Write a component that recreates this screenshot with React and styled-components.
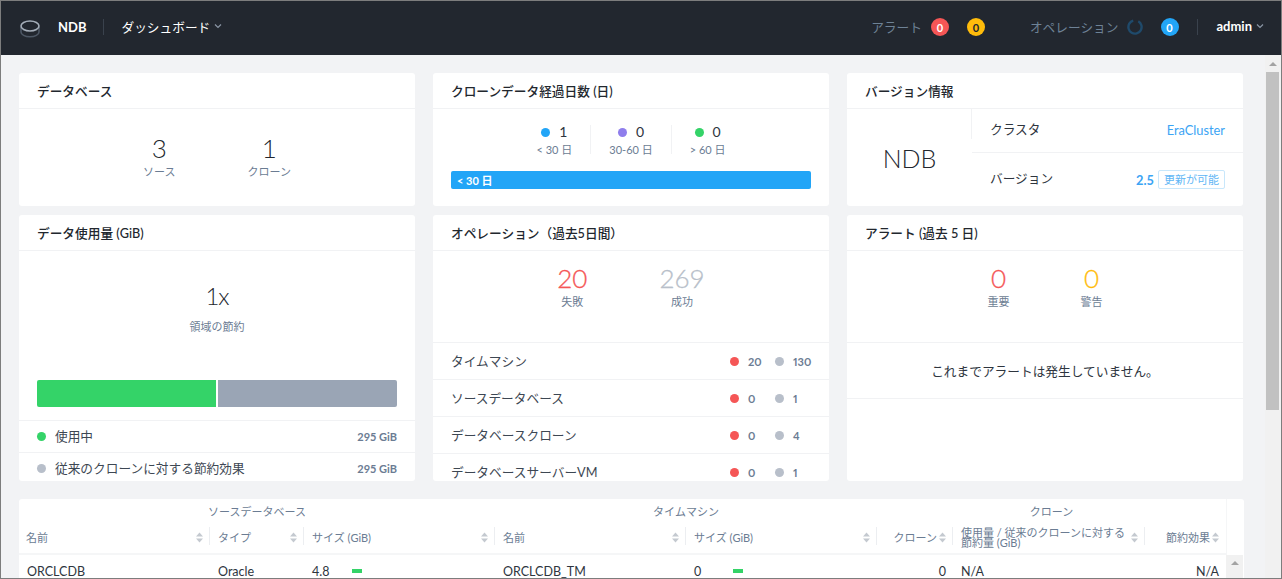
import React from 'react';
import styled, { createGlobalStyle } from 'styled-components';

const GlobalStyle = createGlobalStyle`
  html, body {
    margin: 0;
    height: 100%;
    overflow: hidden;
  }

  * {
    box-sizing: border-box;
  }

  body {
    font-family: Lato, "Noto Sans CJK JP", sans-serif;
    font-size: 12.7px;
    color: #2e353e;
    background: #f2f3f5;
  }
`;

const Frame = styled.div`
  display: flex;
  flex-direction: column;
  height: 579px;
  border: 1px solid #7d7d7d;
  overflow: hidden;
`;

const TopBar = styled.header`
  flex: none;
  display: flex;
  align-items: center;
  justify-content: space-between;
  height: 54px;
  padding: 0 17px 2px 19px;
  background: #22272f;
`;

const BarGroup = styled.div`
  display: flex;
  align-items: center;
`;

const LogoMark = styled.svg`
  margin-top: 3px;
`;

const Brand = styled.strong`
  margin-left: 18px;
  font-weight: 700;
  font-size: 13px;
  color: #fff;
`;

const UserName = styled(Brand)`
  margin-left: 0;
`;

const BarDivider = styled.span`
  width: 1px;
  height: 16px;
  margin: 0 ${({ $right }) => $right}px 0 ${({ $left }) => $left}px;
  background: #3a424d;
`;

const Menu = styled.span`
  display: flex;
  align-items: center;
  gap: 4px;
  padding-bottom: 2px;
  color: #fff;
`;

const BarLabel = styled.span`
  margin-left: ${({ $left }) => $left || 0}px;
  padding-bottom: 2px;
  color: #6e8296;
`;

const Count = styled.span`
  display: flex;
  align-items: center;
  justify-content: center;
  width: 18px;
  height: 18px;
  margin-left: ${({ $left }) => $left}px;
  border-radius: 50%;
  background: ${({ $bg }) => $bg};
  font-weight: 700;
  font-size: 11px;
  color: ${({ $fg }) => $fg || '#fff'};
`;

const SpinnerMark = styled.svg`
  margin-left: 8px;
`;

const Body = styled.div`
  flex: 1;
  display: flex;
  min-height: 0;
`;

const Content = styled.main`
  flex: 1;
  min-width: 0;
  padding: 18px 21px 0 18px;
`;

const Cards = styled.div`
  display: grid;
  grid-template-columns: repeat(3, 396px);
  grid-template-rows: 133px 266px;
  gap: 9px 18px;
`;

const Card = styled.section`
  display: flex;
  flex-direction: column;
  overflow: hidden;
  border-radius: 3px;
  background: #fff;
`;

const CardTitle = styled.h2`
  flex: none;
  height: 36px;
  margin: 0;
  padding: 0 18px;
  border-bottom: 1px solid #f1f2f4;
  font-weight: 500;
  font-size: 12.7px;
  line-height: 37px;
  color: #22272e;
`;

const Stats = styled.div`
  flex: none;
  display: flex;
  justify-content: center;
  gap: ${({ $gap }) => $gap || 72}px;
  height: ${({ $height }) => $height}px;
  padding-top: ${({ $top }) => $top}px;
`;

const Stat = styled.div`
  display: flex;
  flex-direction: column;
  align-items: center;
`;

const StatValue = styled.span`
  font-weight: 300;
  font-size: 26px;
  line-height: 30px;
  color: ${({ $color }) => $color || '#22272e'};
  -webkit-text-stroke: ${({ $color }) => ($color ? '0.3px' : '0')};
`;

const StatLabel = styled.span`
  margin-top: 1px;
  font-size: 11px;
  line-height: 16px;
  color: #6b7c93;
`;

const AgeRow = styled.div`
  display: flex;
  justify-content: center;
  margin-top: 16px;
`;

const AgeItem = styled.div`
  display: flex;
  flex-direction: column;
  align-items: center;
  height: 29px;
  padding: 0 18px;
  border-right: ${({ $last }) => ($last ? 'none' : '1px solid #f1f2f4')};
`;

const AgeValue = styled.span`
  display: flex;
  align-items: center;
  gap: 9px;
  font-size: 14px;
  line-height: 14px;
`;

const AgeLabel = styled.span`
  margin-top: 3px;
  font-size: 11px;
  line-height: 15px;
  color: #6b7c93;
`;

const Dot = styled.i`
  flex: none;
  width: 9px;
  height: 9px;
  border-radius: 50%;
  background: ${({ $color }) => $color};
`;

const AgeBar = styled.div`
  height: 18px;
  margin: 17px 18px 0;
  padding-left: 6px;
  border-radius: 2px;
  background: #22a5f7;
  font-weight: 700;
  font-size: 11px;
  line-height: 19px;
  color: #fff;
`;

const VersionBody = styled.div`
  flex: 1;
  display: flex;
`;

const ProductName = styled.div`
  position: relative;
  display: flex;
  align-items: center;
  justify-content: center;
  width: 125px;
  font-weight: 300;
  font-size: 25px;
  color: #22272e;

  &::after {
    content: '';
    position: absolute;
    top: 0;
    right: 0;
    width: 1px;
    height: 30px;
    background: #f1f2f4;
  }
`;

const VersionRows = styled.div`
  flex: 1;
  display: flex;
  flex-direction: column;
`;

const VersionRow = styled.div`
  flex: ${({ $grow }) => ($grow ? 1 : 'none')};
  display: flex;
  align-items: center;
  justify-content: space-between;
  height: ${({ $grow }) => ($grow ? 'auto' : '44px')};
  padding: 0 18px;
  border-bottom: ${({ $grow }) => ($grow ? 'none' : '1px solid #f1f2f4')};
`;

const VersionLabel = styled.span`
  margin-bottom: 5px;
`;

const BlueText = styled.span`
  margin-bottom: ${({ $bold }) => ($bold ? 0 : 2)}px;
  font-size: 12.8px;
  font-weight: ${({ $bold }) => ($bold ? 700 : 400)};
  color: #3ba4f4;
`;

const VersionValue = styled.span`
  display: flex;
  align-items: center;
  gap: 4px;
`;

const UpdateTag = styled.span`
  height: 19px;
  padding: 0 5px;
  border: 1px solid #c8e7fb;
  border-radius: 2px;
  font-size: 11px;
  line-height: 17px;
  color: #5fb6f5;
`;

const SavingsValue = styled.div`
  flex: none;
  margin-top: 30px;
  text-align: center;
  font-weight: 300;
  font-size: 24px;
  line-height: 30px;
  letter-spacing: -1px;
  color: #22272e;
`;

const SavingsLabel = styled.div`
  flex: none;
  margin-top: 8px;
  text-align: center;
  font-size: 11px;
  line-height: 16px;
  color: #6b7c93;
`;

const UsageBar = styled.div`
  flex: none;
  display: flex;
  gap: 2px;
  height: 27px;
  margin: 45px 18px 13px;
  overflow: hidden;
  border-radius: 2px;
`;

const UsagePart = styled.span`
  flex: 1;
  background: ${({ $color }) => $color};
`;

const ListRow = styled.div`
  flex: none;
  display: flex;
  align-items: center;
  height: ${({ $height }) => $height}px;
  padding: 0 18px;
  border-top: 1px solid #f1f2f4;
`;

const UsageName = styled.span`
  flex: 1;
  margin: 0 0 2px 9px;
  color: #3d4753;
`;

const UsageSize = styled.span`
  font-weight: 700;
  font-size: 11px;
  color: #6b7c93;
`;

const OpName = styled.span`
  flex: 1;
  margin-bottom: 2px;
  color: #3d4753;
`;

const OpCount = styled.span`
  display: flex;
  align-items: center;
  gap: 9px;
  width: ${({ $width }) => $width}px;
  font-size: 11px;
  font-weight: 700;
  font-variant-numeric: proportional-nums;
  color: #6b7c93;
`;

const EmptyNote = styled.div`
  flex: none;
  display: flex;
  align-items: center;
  justify-content: center;
  height: 57px;
  border-top: 1px solid #f1f2f4;
  border-bottom: 1px solid #f1f2f4;
`;

const TableCard = styled.section`
  display: grid;
  grid-template-columns: 191px 94px 191px 191px 191px 76px 192px 81px 17px;
  grid-template-rows: 25px 31px 1fr;
  height: 80px;
  margin-top: 18px;
  overflow: hidden;
  border-radius: 3px 3px 0 0;
  background: #fff;
`;

const GroupHead = styled.div`
  grid-column: span ${({ $span }) => $span};
  padding-top: 5px;
  text-align: center;
  font-size: 11px;
  line-height: 15px;
  color: #6b7c93;
`;

const Corner = styled.div`
  grid-row: span 2;
  border-left: 1px solid #f5f6f7;
`;

const HeadCell = styled.div`
  position: relative;
  display: flex;
  align-items: center;
  justify-content: ${({ $right }) => ($right ? 'flex-end' : 'space-between')};
  gap: 2px;
  padding: 0 7px 2px ${({ $first }) => ($first ? 7 : 8)}px;
  border-bottom: 2px solid #f5f6f7;
  font-size: 11px;
  line-height: 9.5px;
  color: #6b7c93;

  &::after {
    content: '';
    position: absolute;
    top: 3px;
    right: 0;
    width: 1px;
    height: 18px;
    background: ${({ $last }) => ($last ? 'transparent' : '#eceef1')};
  }
`;

const SortMark = styled.svg`
  flex: none;
`;

const Cell = styled.div`
  display: flex;
  align-items: center;
  justify-content: ${({ $right }) => ($right ? 'flex-end' : 'flex-start')};
  gap: ${({ $gap }) => $gap || 0}px;
  height: 32px;
  padding: 0 ${({ $right }) => ($right ? 7 : 8)}px;
  font-size: 12.5px;
`;

const Meter = styled.i`
  width: 10px;
  height: 4px;
  background: #34d368;
`;

const TableTrack = styled.div`
  padding-top: 6px;
  background: #f1f1f1;
`;

const PageTrack = styled.aside`
  flex: none;
  width: 16px;
  padding-top: 7px;
  background: #f1f1f1;
`;

const ArrowUp = styled.i`
  display: block;
  width: 0;
  height: 0;
  margin: 0 auto;
  border-style: solid;
  border-width: 0 4px 4px;
  border-color: transparent transparent #a3a3a3;
`;

const Thumb = styled.div`
  height: 338px;
  margin: 6px 2px 0 1px;
  background: #c1c1c1;
`;

const Chevron = () => (
  <svg width="8" height="8" viewBox="0 0 8 8" fill="none" stroke="#8a96a5" strokeWidth="1.2">
    <path d="M1 2.5l3 3 3-3" />
  </svg>
);

const DbLogo = () => (
  <LogoMark width="20" height="18" viewBox="0 0 20 18" fill="none" strokeWidth="1.6">
    <path d="M1 7v5c0 2.6 4 4.8 9 4.8s9-2.2 9-4.8V7" stroke="#4d5764" />
    <ellipse cx="10" cy="6" rx="9" ry="5" stroke="#a4adb8" />
  </LogoMark>
);

const Spinner = () => (
  <SpinnerMark width="16" height="16" viewBox="0 0 16 16" fill="none" strokeWidth="2.4">
    <circle cx="8" cy="8" r="6.6" stroke="#1f4a6b" strokeDasharray="36 6" transform="rotate(-60 8 8)" />
  </SpinnerMark>
);

const SortIcon = () => (
  <SortMark width="7" height="11" viewBox="0 0 7 11" fill="#c4c9d0">
    <path d="M3.5 0.5L7 4.5H0z" />
    <path d="M3.5 10.5L0 6.5h7z" />
  </SortMark>
);

const operations = [
  { name: 'タイムマシン', failed: 20, passed: 130 },
  { name: 'ソースデータベース', failed: 0, passed: 1 },
  { name: 'データベースクローン', failed: 0, passed: 4 },
  { name: 'データベースサーバーVM', failed: 0, passed: 1 },
];

const App = () => (
  <Frame>
    <GlobalStyle />
    <TopBar>
      <BarGroup>
        <DbLogo />
        <Brand>NDB</Brand>
        <BarDivider $left={17} $right={17} />
        <Menu>
          ダッシュボード
          <Chevron />
        </Menu>
      </BarGroup>
      <BarGroup>
        <BarLabel>アラート</BarLabel>
        <Count $left={9} $bg="#f55656">0</Count>
        <Count $left={18} $bg="#ffbc0b" $fg="#22272f">0</Count>
        <BarLabel $left={45}>オペレーション</BarLabel>
        <Spinner />
        <Count $left={18} $bg="#22a5f7">0</Count>
        <BarDivider $left={18} $right={19} />
        <Menu>
          <UserName as="span">admin</UserName>
          <Chevron />
        </Menu>
      </BarGroup>
    </TopBar>
    <Body>
      <Content>
        <Cards>
          <Card>
            <CardTitle>データベース</CardTitle>
            <Stats $top={24}>
              <Stat>
                <StatValue>3</StatValue>
                <StatLabel>ソース</StatLabel>
              </Stat>
              <Stat>
                <StatValue>1</StatValue>
                <StatLabel>クローン</StatLabel>
              </Stat>
            </Stats>
          </Card>
          <Card>
            <CardTitle>クローンデータ経過日数 (日)</CardTitle>
            <AgeRow>
              <AgeItem>
                <AgeValue><Dot $color="#22a5f7" />1</AgeValue>
                <AgeLabel>&lt; 30 日</AgeLabel>
              </AgeItem>
              <AgeItem>
                <AgeValue><Dot $color="#8f7eec" />0</AgeValue>
                <AgeLabel>30-60 日</AgeLabel>
              </AgeItem>
              <AgeItem $last>
                <AgeValue><Dot $color="#34d368" />0</AgeValue>
                <AgeLabel>&gt; 60 日</AgeLabel>
              </AgeItem>
            </AgeRow>
            <AgeBar>&lt; 30 日</AgeBar>
          </Card>
          <Card>
            <CardTitle>バージョン情報</CardTitle>
            <VersionBody>
              <ProductName>NDB</ProductName>
              <VersionRows>
                <VersionRow>
                  <VersionLabel>クラスタ</VersionLabel>
                  <BlueText>EraCluster</BlueText>
                </VersionRow>
                <VersionRow $grow>
                  <VersionLabel>バージョン</VersionLabel>
                  <VersionValue>
                    <BlueText $bold>2.5</BlueText>
                    <UpdateTag>更新が可能</UpdateTag>
                  </VersionValue>
                </VersionRow>
              </VersionRows>
            </VersionBody>
          </Card>
          <Card>
            <CardTitle>データ使用量 (GiB)</CardTitle>
            <SavingsValue>1x</SavingsValue>
            <SavingsLabel>領域の節約</SavingsLabel>
            <UsageBar>
              <UsagePart $color="#34d368" />
              <UsagePart $color="#9aa5b5" />
            </UsageBar>
            <ListRow $height={32}>
              <Dot $color="#34d368" />
              <UsageName>使用中</UsageName>
              <UsageSize>295 GiB</UsageSize>
            </ListRow>
            <ListRow $height={32}>
              <Dot $color="#b8bfca" />
              <UsageName>従来のクローンに対する節約効果</UsageName>
              <UsageSize>295 GiB</UsageSize>
            </ListRow>
          </Card>
          <Card>
            <CardTitle>オペレーション（過去5日間）</CardTitle>
            <Stats $top={12} $height={91}>
              <Stat>
                <StatValue $color="#f55656">20</StatValue>
                <StatLabel>失敗</StatLabel>
              </Stat>
              <Stat>
                <StatValue $color="#b8bfca">269</StatValue>
                <StatLabel>成功</StatLabel>
              </Stat>
            </Stats>
            {operations.map(op => (
              <ListRow key={op.name} $height={37}>
                <OpName>{op.name}</OpName>
                <OpCount $width={45}><Dot $color="#f55656" />{op.failed}</OpCount>
                <OpCount $width={36}><Dot $color="#b8bfca" />{op.passed}</OpCount>
              </ListRow>
            ))}
          </Card>
          <Card>
            <CardTitle>アラート (過去 5 日)</CardTitle>
            <Stats $top={12} $height={91} $gap={71}>
              <Stat>
                <StatValue $color="#f55656">0</StatValue>
                <StatLabel>重要</StatLabel>
              </Stat>
              <Stat>
                <StatValue $color="#ffbc0b">0</StatValue>
                <StatLabel>警告</StatLabel>
              </Stat>
            </Stats>
            <EmptyNote>これまでアラートは発生していません。</EmptyNote>
          </Card>
        </Cards>
        <TableCard>
          <GroupHead $span={3}>ソースデータベース</GroupHead>
          <GroupHead $span={2}>タイムマシン</GroupHead>
          <GroupHead $span={3}>クローン</GroupHead>
          <Corner />
          <HeadCell $first>名前<SortIcon /></HeadCell>
          <HeadCell>タイプ<SortIcon /></HeadCell>
          <HeadCell><span>サイズ (GiB)</span><SortIcon /></HeadCell>
          <HeadCell>名前<SortIcon /></HeadCell>
          <HeadCell><span>サイズ (GiB)</span><SortIcon /></HeadCell>
          <HeadCell $right>クローン<SortIcon /></HeadCell>
          <HeadCell><span>使用量 / 従来のクローンに対する節約量 (GiB)</span><SortIcon /></HeadCell>
          <HeadCell $right $last>節約効果<SortIcon /></HeadCell>
          <Cell>ORCLCDB</Cell>
          <Cell>Oracle</Cell>
          <Cell $gap={23}>4.8<Meter /></Cell>
          <Cell>ORCLCDB_TM</Cell>
          <Cell $gap={32}>0<Meter /></Cell>
          <Cell $right>0</Cell>
          <Cell>N/A</Cell>
          <Cell $right>N/A</Cell>
          <TableTrack><ArrowUp /></TableTrack>
        </TableCard>
      </Content>
      <PageTrack>
        <ArrowUp />
        <Thumb />
      </PageTrack>
    </Body>
  </Frame>
);

export default App;
